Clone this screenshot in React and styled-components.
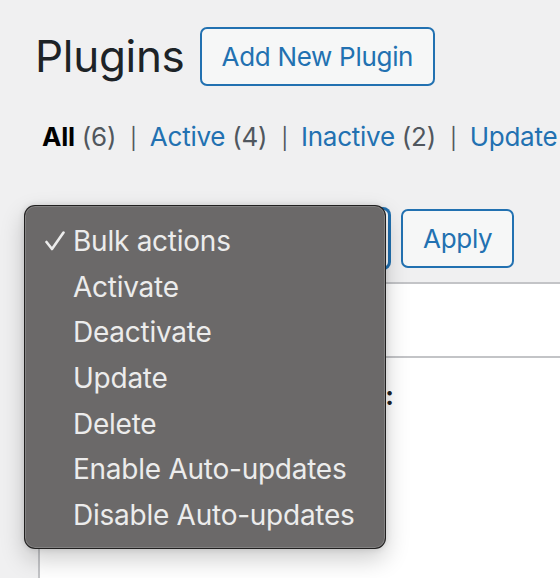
import React from "react";
import styled, { createGlobalStyle } from "styled-components";

const GlobalStyle = createGlobalStyle`
  html, body {
    margin: 0;
    padding: 0;
    background: #f0f0f1;
    overflow: hidden;
  }
  body {
    font-family: Inter, "Liberation Sans", sans-serif;
    color: #1d2327;
    width: 560px;
    height: 578px;
    position: relative;
  }
`;

const Wrap = styled.div`
  padding: 27px 0 0 35px;
`;

const Header = styled.div`
  display: flex;
  align-items: center;
  gap: 15px;
`;

const Title = styled.h1`
  margin: 0;
  font-size: 44px;
  font-weight: 400;
  line-height: 59px;
  letter-spacing: -0.3px;
  color: #1d2327;
`;

const OutlineButton = styled.button`
  box-sizing: border-box;
  height: ${(p) => p.$h || 59}px;
  padding: 0 ${(p) => p.$pad || 20}px;
  border: 2px solid #2271b1;
  border-radius: 7px;
  background: #f6f7f7;
  color: #2271b1;
  font-family: inherit;
  font-size: 26px;
  line-height: 55px;
  letter-spacing: -0.3px;
`;

const Filters = styled.ul`
  display: flex;
  align-items: baseline;
  margin: 31px 0 0 7px;
  padding: 0;
  list-style: none;
  font-size: 26px;
  line-height: 40px;
  letter-spacing: -0.25px;
  white-space: nowrap;
`;

const FilterItem = styled.li`
  display: flex;
  align-items: baseline;
`;

const FilterLink = styled.a`
  color: ${(p) => (p.$current ? "#000" : "#2271b1")};
  font-weight: ${(p) => (p.$current ? 700 : 400)};
  text-decoration: none;
`;

const Count = styled.span`
  color: #50575e;
  font-weight: 400;
  margin-left: 7px;
`;

const Sep = styled.span`
  color: #50575e;
  font-size: 21px;
  margin: 0 13px 0 14px;
`;

const TableNav = styled.div`
  display: flex;
  align-items: center;
  gap: 11px;
  margin: 49px 0 0 3px;
`;

const FakeSelect = styled.div`
  box-sizing: border-box;
  width: 352px;
  height: 61px;
  border: 2px solid #2271b1;
  border-radius: 7px;
  background: #fff;
  box-shadow: 0 0 0 1px #2271b1;
`;

const Table = styled.div`
  box-sizing: border-box;
  width: 900px;
  height: 320px;
  margin: 13px 0 0 3px;
  background: #fff;
  border: 2px solid #c3c4c7;
`;

const HeadRow = styled.div`
  height: 72px;
  border-bottom: 2px solid #c3c4c7;
`;

const Row = styled.div`
  display: flex;
  padding-top: 18px;
`;

const CheckCol = styled.div`
  width: 80px;
  flex: none;
`;

const NameCol = styled.div`
  width: 280px;
  flex: none;
  padding: 0 14px 0 20px;
  font-size: 26px;
  line-height: 40px;
`;

const PluginName = styled.strong`
  display: block;
  font-weight: 700;
  color: #1d2327;
`;

const Menu = styled.div`
  position: absolute;
  left: 24px;
  top: 205px;
  box-sizing: border-box;
  width: 362px;
  padding: 12px 0 10px;
  background: #6b6969;
  border: 1px solid rgba(20, 20, 20, 0.85);
  border-radius: 11px;
  box-shadow: inset 0 0 0 1px rgba(255, 255, 255, 0.16),
    0 10px 24px rgba(0, 0, 0, 0.2), 0 0 6px rgba(0, 0, 0, 0.12);
`;

const MenuItem = styled.div`
  display: flex;
  align-items: center;
  height: 45.7px;
  padding-left: 20px;
  font-size: 28px;
  letter-spacing: -0.25px;
  color: #ececec;
  white-space: nowrap;
`;

const CheckSlot = styled.span`
  display: flex;
  align-items: center;
  width: 28px;
  flex: none;
`;

const Check = () => (
  <svg width="20" height="20" viewBox="0 0 20 20" fill="none">
    <polyline
      points="1.5,11 7,18 18.5,1.5"
      stroke="#ececec"
      strokeWidth="2.6"
      strokeLinecap="round"
      strokeLinejoin="round"
    />
  </svg>
);

const filters = [
  { label: "All", count: 6, current: true },
  { label: "Active", count: 4 },
  { label: "Inactive", count: 2 },
  { label: "Update Available", count: 1 },
];

const actions = [
  "Bulk actions",
  "Activate",
  "Deactivate",
  "Update",
  "Delete",
  "Enable Auto-updates",
  "Disable Auto-updates",
];

export default function App() {
  return (
    <>
      <GlobalStyle />
      <Wrap>
        <Header>
          <Title>Plugins</Title>
          <OutlineButton>Add New Plugin</OutlineButton>
        </Header>

        <Filters>
          {filters.map((f, i) => (
            <FilterItem key={f.label}>
              <FilterLink href="#" $current={f.current}>
                {f.label}
                <Count>({f.count})</Count>
              </FilterLink>
              {i < filters.length - 1 && <Sep>|</Sep>}
            </FilterItem>
          ))}
        </Filters>

        <TableNav>
          <FakeSelect />
          <OutlineButton $pad={20}>Apply</OutlineButton>
        </TableNav>

        <Table>
          <HeadRow />
          <Row>
            <CheckCol />
            <NameCol>
              <PluginName>Akismet Anti-spam: Spam Protection</PluginName>
            </NameCol>
          </Row>
        </Table>
      </Wrap>

      <Menu>
        {actions.map((a, i) => (
          <MenuItem key={a}>
            <CheckSlot>{i === 0 && <Check />}</CheckSlot>
            {a}
          </MenuItem>
        ))}
      </Menu>
    </>
  );
}
